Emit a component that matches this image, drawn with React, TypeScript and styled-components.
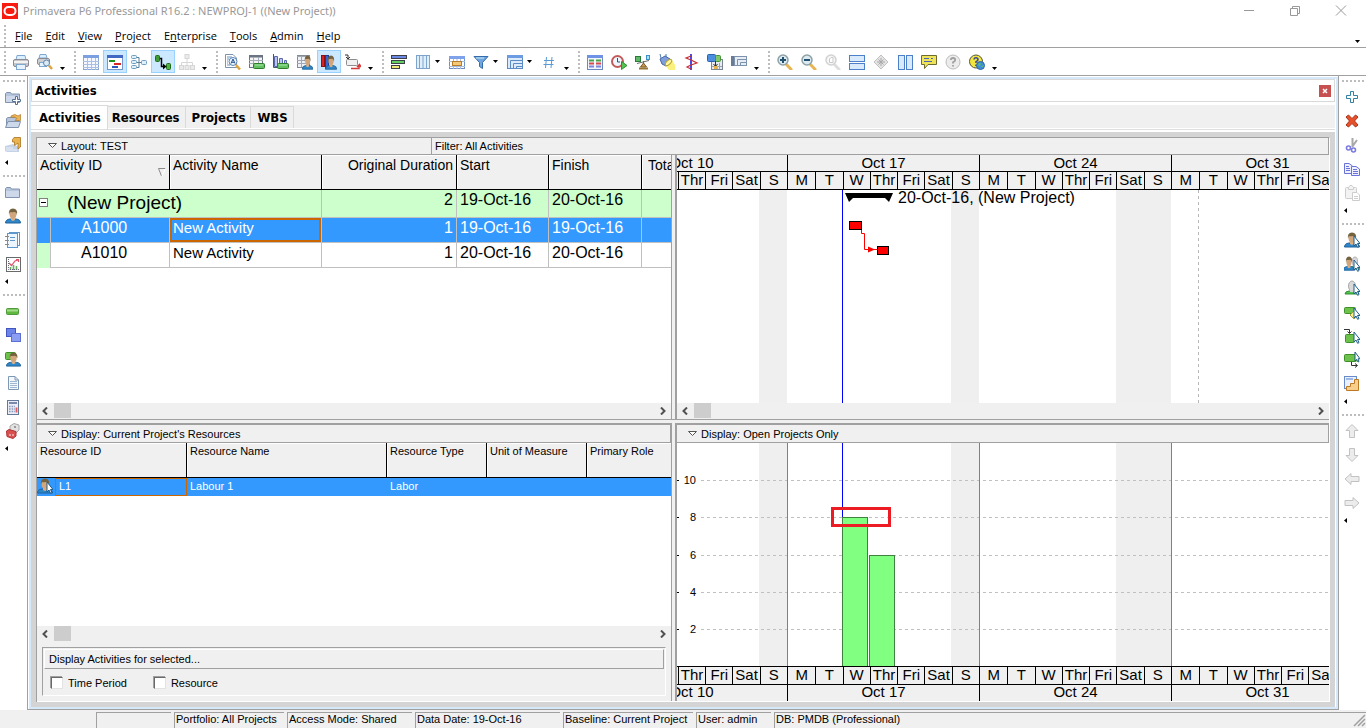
import React from "react";
import styled, { createGlobalStyle, css } from "styled-components";

const LINE = "#a0a0a0";
const FACE = "#f0f0f0";
const SELECT = "#3399ff";
const FOCUS = "#cc6600";
const GROUP = "#ccffcc";

const GlobalStyle = createGlobalStyle`
  * { box-sizing: border-box; }
  body {
    margin: 0;
    background: #fff;
    color: #000;
    font-family: "Liberation Sans", Arial, sans-serif;
    font-size: 11px;
    line-height: 14px;
  }
  button { font: inherit; color: inherit; padding: 0; margin: 0; border: 0; background: none; }
  svg { display: block; }
`;

/* ---------- icons ---------- */

const cursor = (
  <path d="M10 4V14L12 12L13.6 15.3L15 14.6L13.5 11.5H16Z" fill="#fff" stroke="#1f5f8b" strokeWidth="1" />
);

const person = (
  <>
    <path d="M0.5 15Q0.5 11.5 5 11H11Q15.5 11.5 15.5 15Z" fill="#2f86c9" stroke="#1f6299" />
    <path d="M6 9H10V12L8 13L6 12Z" fill="#d9ae85" />
    <ellipse cx="8" cy="6" rx="3.5" ry="4.5" fill="#d2a67c" />
    <path d="M4 7Q3 1 8 0.6Q13 1 12 7Q11.5 3.8 9 4Q6 4.5 5 4Q4.4 5 4 7Z" fill="#75623f" />
  </>
);

const ghost = (
  <>
    <path d="M1 14Q1 11.5 5 11H11Q15 11.5 15 14Z" fill="#55c255" stroke="#2e8f2e" />
    <ellipse cx="8" cy="6" rx="3.5" ry="5" fill="#d9d9d9" stroke="#a9a9a9" />
    <path d="M6 10H10V12H6Z" fill="#d0d0d0" />
  </>
);

const folder = (
  <>
    <path d="M0.5 13.5V4.5L1.5 3.5H5.5L6.5 5H14.5V13.5Z" fill="#b5c5dc" stroke="#8293ae" />
    <path d="M1 7H14V13H1Z" fill="#cdd9ea" />
  </>
);

const greenBar = (
  <>
    <rect x="1.5" y="5.5" width="12" height="6" rx="1" fill="#5fb93f" stroke="#4f9a3b" />
    <path d="M2 7.5H13" stroke="#a5dc8c" strokeWidth="2" />
  </>
);

const gridTable = (
  <>
    <rect x="0.5" y="1.5" width="15" height="14" fill="#f5f9ff" stroke="#8ba6cf" />
    <rect x="0" y="1" width="16" height="3" fill="#7c9fe0" />
    <path d="M0 7.5H16M0 10.5H16M0 13.5H16M4.5 4V16M8.5 4V16M12.5 4V16" stroke="#a9c0e4" />
  </>
);

const lens = (inner: React.ReactNode, muted = false) => (
  <>
    <path d="M9.5 10.5L14 15.2" stroke={muted ? "#dedede" : "#e9b552"} strokeWidth="3" strokeLinecap="round" />
    <circle cx="6" cy="6" r="5" fill={muted ? "#f7f7f7" : "#dcebf2"} stroke={muted ? "#d2d2d2" : "#8ea1a5"} strokeWidth="1.5" />
    {inner}
  </>
);

const ICONS: Record<string, React.ReactNode> = {
  printer: (
    <>
      <path d="M4 1.5H12L13 6H3Z" fill="#dcefff" stroke="#7fa8d0" />
      <rect x="0.5" y="5.5" width="15" height="7" rx="1.5" fill="#c6c6ca" stroke="#8a8a90" />
      <path d="M1 8H15" stroke="#f3f3f3" strokeWidth="2" />
      <rect x="3.5" y="10.5" width="9" height="5" fill="#e6f3ff" stroke="#7fa8d0" />
    </>
  ),
  preview: (
    <>
      <path d="M3 0.5H9L10 4H2Z" fill="#dcefff" stroke="#7fa8d0" />
      <rect x="0.5" y="4.5" width="12" height="6" rx="1.5" fill="#cfcfd2" stroke="#8a8a90" />
      <rect x="2.5" y="8.5" width="7" height="4" fill="#e6f3ff" stroke="#7fa8d0" />
      <circle cx="9.5" cy="9" r="3" fill="#dcebf2" stroke="#5c87b5" />
      <path d="M12 11.5L15 15" stroke="#d9a441" strokeWidth="2.5" />
    </>
  ),
  table: gridTable,
  gantt: (
    <>
      <rect x="0.5" y="1.5" width="15" height="14" fill="#fff" stroke="#7396cf" />
      <rect x="0" y="1" width="16" height="3" fill="#4169c4" />
      <rect x="2" y="6" width="6" height="2" fill="#1f8f1f" />
      <rect x="7" y="9" width="7" height="2" fill="#d62828" />
      <rect x="5" y="12" width="6" height="2" fill="#2a57c4" />
    </>
  ),
  trace: (
    <>
      <path d="M5 3.5H8V13.5H5M5 8.5H11" fill="none" stroke="#5b7f96" />
      <g fill="#dff0fb" stroke="#6f9dbd">
        <rect x="0.5" y="1.5" width="5" height="3" rx="1" />
        <rect x="0.5" y="6.5" width="5" height="3" rx="1" />
        <rect x="0.5" y="11.5" width="5" height="3" rx="1" />
        <rect x="10.5" y="6.5" width="5" height="4" rx="1" />
      </g>
    </>
  ),
  logic: (
    <>
      <rect x="0.5" y="1.5" width="4" height="6" rx="1" fill="#3f9b34" stroke="#1f6b1a" />
      <rect x="11.5" y="9.5" width="4" height="6" rx="1" fill="#4fb343" stroke="#1f6b1a" />
      <path d="M5 4.5H6.5V12.5H8.5" fill="none" stroke="#000" strokeWidth="1.5" />
      <path d="M8 9.5V15.5L11.5 12.5Z" fill="#000" />
    </>
  ),
  chart: (
    <g fill="#ebebeb" stroke="#d6d6d6">
      <path d="M8 5V8M2.5 11V8.5H13.5V11M8 8V11" fill="none" />
      <rect x="6" y="0.5" width="4" height="4" />
      <rect x="0.5" y="11.5" width="4" height="4" />
      <rect x="6" y="11.5" width="4" height="4" />
      <rect x="11.5" y="11.5" width="4" height="4" />
    </g>
  ),
  find: (
    <>
      <path d="M0.5 0.5H8L11.5 4V13.5H0.5Z" fill="#fff" stroke="#7b93ad" />
      <path d="M2 3H7M2 5H4M2 7H3M2 9H3M2 11H5" stroke="#6d8fc0" />
      <circle cx="8" cy="7.5" r="4" fill="#eaf5ff" stroke="#5883b3" />
      <path d="M6 9.5L8 5L10 9.5M7 8.3H9" fill="none" stroke="#24508f" />
      <path d="M11 11L15 15.5" stroke="#e0a63a" strokeWidth="2.5" />
    </>
  ),
  tableBar: (
    <>
      <rect x="0.5" y="1.5" width="13" height="12" fill="#f4f4f4" stroke="#6b7484" />
      <path d="M0 2.5H14" stroke="#6b7484" strokeWidth="2" />
      <path d="M0 6.5H14M0 9.5H14M4.5 3V13M9.5 3V13" stroke="#a2aab7" />
      <rect x="4.5" y="9.5" width="11" height="5" rx="1" fill="#63c163" stroke="#2a7d2a" />
      <path d="M6 11H14" stroke="#a9e6a9" />
    </>
  ),
  profile: (
    <>
      <path d="M0.5 0V13.5H6" fill="none" stroke="#4a5568" />
      <path d="M1.5 12.5V2.5H4.5V12.5ZM6.5 12V4.5H9.5V9M11.5 9V6.5H13.5V9" fill="#b9c5ee" stroke="#5968a8" />
      <rect x="4.5" y="9.5" width="11" height="5" rx="1" fill="#63c163" stroke="#2a7d2a" />
      <path d="M6 11H14" stroke="#a9e6a9" />
    </>
  ),
  resSheet: (
    <>
      <rect x="0.5" y="1.5" width="12" height="12" fill="#eef1f6" stroke="#858c98" />
      <path d="M0 2.5H13M0 6.5H13M0 9.5H13M4.5 2V13" stroke="#a0a8b5" />
      <g transform="translate(5 1) scale(0.7 0.95)">{person}</g>
    </>
  ),
  resProfile: (
    <>
      <rect x="0.5" y="1.5" width="3" height="11" fill="#d62424" stroke="#8f1010" />
      <rect x="4.5" y="1.5" width="3" height="13" fill="#3567d6" stroke="#173e96" />
      <g transform="translate(4 1) scale(0.75 0.95)">{person}</g>
    </>
  ),
  nextStep: (
    <>
      <path d="M0 1H3V4M1 3L3 5L5 3" fill="none" stroke="#333" />
      <rect x="1.5" y="5.5" width="11" height="6" rx="1" fill="#f1f1f1" stroke="#8d8d8d" />
      <path d="M6 14.5H14V12M12 13L14.5 10.5L16 13" fill="none" stroke="#d23a3a" strokeWidth="1.5" />
    </>
  ),
  bars: (
    <g stroke="#3c3f45">
      <rect x="0.5" y="1.5" width="15" height="3" fill="#6a8ae6" />
      <rect x="0.5" y="6.5" width="13" height="3" fill="#63cf63" />
      <rect x="0.5" y="11.5" width="8" height="3" fill="#efe97a" />
    </g>
  ),
  columns: (
    <>
      <rect x="1.5" y="1.5" width="13" height="13" fill="#dfeefb" stroke="#7fa4cc" />
      <path d="M4.5 1V15M8 1V15M11.5 1V15" stroke="#7fa4cc" />
    </>
  ),
  timescale: (
    <>
      <rect x="0.5" y="2.5" width="15" height="12" fill="#fff" stroke="#6f8fc4" />
      <rect x="0" y="2" width="16" height="3" fill="#7fa2ea" />
      <path d="M0 7.5H16M0 12.5H16M4.5 5V15M8 5V15M11.5 5V15" stroke="#a8bce0" />
      <rect x="3.5" y="7.5" width="9" height="4" fill="#f4c879" stroke="#b57d2c" />
    </>
  ),
  filter: (
    <>
      <path d="M1 2.5H15L9.5 8.5V14.5L6.5 12.5V8.5Z" fill="#6fa6de" stroke="#336ca8" />
      <path d="M3 4H11" stroke="#cfe4f8" />
    </>
  ),
  group: (
    <>
      <rect x="0.5" y="1.5" width="15" height="13" fill="#dcebfb" stroke="#5c8bc4" />
      <rect x="0" y="1" width="16" height="3" fill="#6b9be0" />
      <path d="M3.5 15V6.5H15M6.5 15V9.5H15M9.5 15V12.5H15" fill="none" stroke="#5c8bc4" />
    </>
  ),
  hash: <path d="M5.5 3L4.5 14M11 3L10 14M3 6.5H13M2.5 10.5H12.5" stroke="#5a9bd5" fill="none" />,
  details: (
    <>
      <rect x="0.5" y="1.5" width="15" height="14" fill="#f1f5fc" stroke="#6c88bf" />
      <rect x="0" y="1" width="16" height="3" fill="#6e93e6" />
      <path d="M2 6.5H7M9 6.5H14" stroke="#4aa34a" strokeWidth="2" />
      <path d="M2 9.5H7M9 9.5H14" stroke="#d84a4a" strokeWidth="2" />
      <path d="M2 12.5H7M9 12.5H14" stroke="#7d86e0" strokeWidth="2" />
    </>
  ),
  schedule: (
    <>
      <circle cx="6.5" cy="7.5" r="5.5" fill="#eef6ff" stroke="#c25c5c" strokeWidth="2" />
      <path d="M6.5 4V8H9" fill="none" stroke="#33507a" />
      <path d="M10.5 7.5V15.5L16 11.5Z" fill="#52c552" stroke="#2f8f2f" />
    </>
  ),
  level: (
    <>
      <rect x="0.5" y="2.5" width="5" height="5" fill="#5fb96b" stroke="#2b7a39" />
      <rect x="11.5" y="1.5" width="3" height="4" fill="#a8e1f8" stroke="#3c92c8" />
      <path d="M2 9.5L14 6.5M8.5 7V12" stroke="#6b6b6b" fill="none" />
      <path d="M8.5 9L11.5 13H5.5Z" fill="#c89a55" stroke="#7d5a22" />
      <path d="M4 14.5H13" stroke="#9a7433" strokeWidth="2" />
    </>
  ),
  spotlight: (
    <>
      <path d="M7 12L13 6L16 11V16H10Z" fill="#f9f17c" />
      <path d="M1 5L6 2L11 5L12 8L7 12L3 10Z" fill="#7d9edb" stroke="#4566a8" />
      <path d="M1 0L2 4M7 0V3" stroke="#4b78a8" />
      <ellipse cx="9.5" cy="8.5" rx="4" ry="2" transform="rotate(-45 9.5 8.5)" fill="#fff7a3" stroke="#b5a32a" />
    </>
  ),
  progress: (
    <>
      <rect x="7" y="0" width="2" height="16" fill="#4b4bef" />
      <path d="M8 2L3 4L8 6L14 9L8 11L4 13L8 15" fill="none" stroke="#c63030" strokeWidth="1.2" />
    </>
  ),
  store: (
    <>
      <rect x="4.5" y="5.5" width="11" height="10" fill="#e8ebef" stroke="#7c8795" />
      <path d="M5 12.5H15M12.5 9V15" stroke="#9aa5b3" />
      <rect x="0.5" y="0.5" width="8" height="7" rx="1" fill="#4c8fe0" stroke="#2b62ab" />
      <rect x="8.5" y="1.5" width="5" height="6" rx="1" fill="#7fc96a" stroke="#46913a" />
      <path d="M8.5 7V12M6.5 10L8.5 12.5L10.5 10" stroke="#333" fill="none" />
      <rect x="7" y="12" width="4" height="3" fill="#e6b24e" />
    </>
  ),
  groupGrey: (
    <>
      <rect x="0" y="2" width="3" height="10" fill="#6b7b91" />
      <rect x="3.5" y="2.5" width="12" height="9" fill="#e6edf5" stroke="#7d93ad" />
      <path d="M6.5 12V5.5H15M9.5 12V8.5H15" fill="none" stroke="#7d93ad" />
    </>
  ),
  zoomIn: lens(<path d="M3 6H9M6 3V9" stroke="#23506f" strokeWidth="2" />),
  zoomOut: lens(<path d="M3 6H9" stroke="#23506f" strokeWidth="2" />),
  zoomFit: lens(<path d="M4.5 8.5V5L6 3.5H8V8.5Z" fill="#fff" stroke="#c9c9c9" />, true),
  splitH: (
    <g fill="#d8eafc" stroke="#4c80c8">
      <rect x="0.5" y="1.5" width="15" height="6" />
      <rect x="0.5" y="9.5" width="15" height="6" />
    </g>
  ),
  splitV: (
    <g fill="#d8eafc" stroke="#4c80c8">
      <rect x="1.5" y="1.5" width="6" height="14" />
      <rect x="9.5" y="1.5" width="6" height="14" />
    </g>
  ),
  diamond: (
    <>
      <path d="M8 1L15 8L8 15L1 8Z" fill="#e3e3e3" stroke="#c2c2c2" />
      <path d="M8 4V12M4 8H12M5.5 5.5L10.5 10.5M10.5 5.5L5.5 10.5" stroke="#a9a9a9" />
    </>
  ),
  note: (
    <>
      <path d="M0.5 1.5H15.5V10.5H7L3.5 14.5V10.5H0.5Z" fill="#eee45a" stroke="#6e6b2d" />
      <path d="M3 4.5H8M10 4.5H12M3 7.5H11" stroke="#4f63b5" />
    </>
  ),
  help: (
    <>
      <circle cx="8" cy="8" r="7" fill="#ececec" stroke="#bdbdbd" />
      <path d="M5.8 6Q6 4 8 4Q10.2 4 10.2 6Q10.2 7.2 8 8.3V9.5M8 11V12.5" fill="none" stroke="#a0a0a0" strokeWidth="1.8" />
    </>
  ),
  helpWeb: (
    <>
      <circle cx="7" cy="7.5" r="6.5" fill="#f2e63c" stroke="#55553a" />
      <path d="M5 5.5Q5.2 3.8 7 3.8Q9 3.8 9 5.6Q9 6.8 7 7.8V9M7 10.5V12" fill="none" stroke="#3a49a0" strokeWidth="1.6" />
      <circle cx="11.5" cy="11.5" r="4" fill="#3f8fd8" stroke="#2a64a5" />
      <path d="M9 10Q11 8.5 12 10Q11 12 10 12ZM12 13L14.5 11V13Z" fill="#5fc060" />
    </>
  ),
  folderAdd: (
    <>
      {folder}
      <path d="M10.5 7.5V10.5H7.5V12.5H10.5V15.5H12.5V12.5H15.5V10.5H12.5V7.5Z" fill="#fff" stroke="#55708f" />
    </>
  ),
  folderOpen: (
    <>
      <path d="M1.5 13.5V5.5L3 4.5H13.5V13.5Z" fill="#b5c5dc" stroke="#8293ae" />
      <path d="M0.5 14.5L3 8.5H15.5L13.5 14.5Z" fill="#cdd9ea" stroke="#8293ae" />
      <path d="M6 3Q10 0 13 3L15.5 1.5V7.5H10L12 5.5Q9 3 6 4.5Z" fill="#edb458" stroke="#b07a24" strokeWidth="0.7" />
    </>
  ),
  folderClose: (
    <>
      <path d="M0 14V9L8 7L14 10V15L2 15Z" fill="#c6d3e6" />
      <path d="M1 11H8M1 13H12" stroke="#e9eff8" />
      <path d="M7.5 2.5L9 0.5H15.5V10L13 12V6L9.5 8.5V5H7.5Z" fill="#e9b34f" stroke="#a97420" strokeWidth="0.8" />
    </>
  ),
  folder,
  person,
  notebook: (
    <>
      <rect x="4.5" y="0.5" width="10" height="13" fill="#fff" stroke="#5f97cb" />
      <rect x="2.5" y="1.5" width="10" height="14" fill="#eef6fd" stroke="#5f97cb" />
      <path d="M5 5.5H10M5 8.5H10" stroke="#5f97cb" />
      <path d="M0 4.5H4M0 8.5H4M0 12.5H4" stroke="#8a8a8a" />
    </>
  ),
  trend: (
    <>
      <rect x="1.5" y="1.5" width="14" height="14" fill="#fff" stroke="#6a6a6a" />
      <path d="M5.5 14V11M8.5 14V9M11.5 14V10" stroke="#63b063" strokeWidth="1.6" />
      <path d="M4 7L6.5 9.5L10 5L13 4M11 3.5H13.5V6" fill="none" stroke="#e0526b" strokeWidth="1.2" />
      <path d="M3.5 3V13.5H14" fill="none" stroke="#667" strokeDasharray="1 1" />
    </>
  ),
  greenBar,
  squares: (
    <>
      <rect x="1.5" y="1.5" width="9" height="8" fill="#6c83ea" stroke="#4257bd" />
      <rect x="6.5" y="6.5" width="9" height="8" fill="#8b9ef2" stroke="#5c70d4" />
    </>
  ),
  assign: (
    <>
      <rect x="0.5" y="1.5" width="10" height="7" rx="1" fill="#6cc24a" stroke="#3f8f2b" />
      <g transform="translate(1 1) scale(0.94)">{person}</g>
    </>
  ),
  doc: (
    <>
      <path d="M3.5 1.5H10L13.5 5V14.5H3.5Z" fill="#f4f8fd" stroke="#7c98b5" />
      <path d="M10 1.5V5H13.5" fill="none" stroke="#7c98b5" />
      <path d="M5 6.5H12M5 8.5H12M5 10.5H12M5 12.5H12" stroke="#9db7d3" />
    </>
  ),
  calc: (
    <>
      <rect x="2.5" y="1.5" width="11" height="14" fill="#e9edf6" stroke="#66779c" />
      <rect x="4" y="3" width="8" height="2" fill="#7a88ad" />
      <path d="M4 7.5H10M4 10H10M4 12.5H10" stroke="#8b98bd" strokeWidth="1.6" strokeDasharray="1.6 1" />
      <path d="M11.5 8.5V13.5" stroke="#e05a5a" strokeWidth="1.8" />
    </>
  ),
  dice: (
    <>
      <path d="M5 3L9 0.5L14 2V7L11 10L5 8Z" fill="#e2e2e2" stroke="#a8a8a8" />
      <path d="M1.5 8L4 6.5L11 8.5V13L8 15.5L2 13.5Z" fill="#d95050" stroke="#b03434" />
      <circle cx="10" cy="4" r="0.9" fill="#777" />
      <circle cx="5" cy="12" r="0.8" fill="#fff" />
      <circle cx="8" cy="12" r="0.8" fill="#fff" />
    </>
  ),
  add: <path d="M6.5 2.5H9.5V6.5H13.5V9.5H9.5V13.5H6.5V9.5H2.5V6.5H6.5Z" fill="#fff" stroke="#3480a3" />,
  remove: (
    <path d="M2 4L4.5 2L8 5.5L11.5 2L14 4L10.5 8L14 12L11.5 14L8 10.5L4.5 14L2 12L5.5 8Z" fill="#e8502c" stroke="#a83216" />
  ),
  cut: (
    <>
      <path d="M8.5 1V10M13 3L8 10" stroke="#a8a8a8" strokeWidth="2" fill="none" />
      <circle cx="4.5" cy="11" r="2" fill="none" stroke="#7b7be0" strokeWidth="1.6" />
      <circle cx="9.5" cy="13" r="2" fill="none" stroke="#7b7be0" strokeWidth="1.6" />
    </>
  ),
  copy: (
    <g fill="#eef0ff" stroke="#6a73d8">
      <path d="M0.5 2.5H5L8.5 5V12.5H0.5Z" />
      <path d="M7.5 5.5H12L15.5 8V14.5H7.5Z" />
      <path d="M2 5.5H5M2 7.5H6M2 9.5H6M9 8.5H13M9 10.5H14M9 12.5H14" />
    </g>
  ),
  paste: (
    <g fill="#f3f3f3" stroke="#cdcdcd">
      <rect x="1.5" y="2.5" width="11" height="11" rx="1" />
      <path d="M4.5 4.5V2.5L6 0.5H8L9.5 2.5V4.5Z" />
      <path d="M8.5 7.5H13L15.5 10V15.5H8.5Z" fill="#fff" />
      <path d="M10 11.5H14M10 13.5H14" />
    </g>
  ),
  personPick: (
    <>
      {person}
      {cursor}
    </>
  ),
  peoplePick: (
    <>
      <g transform="translate(5 0) scale(0.75 0.95)">{ghost}</g>
      <g transform="translate(-1 0) scale(0.75 0.95)">{person}</g>
      {cursor}
    </>
  ),
  ghostPick: (
    <>
      {ghost}
      {cursor}
    </>
  ),
  codePick: (
    <>
      <rect x="0.5" y="3.5" width="11" height="6" rx="1" fill="#6cc24a" stroke="#3f8f2b" />
      <path d="M6 11L10 7L14 11L10 15Z" fill="#f7f08a" stroke="#a8993a" />
      {cursor}
    </>
  ),
  predecessor: (
    <>
      <path d="M0 1.5H5.5V5M3.5 3.5L5.5 5.5L7.5 3.5" fill="none" stroke="#333" />
      <rect x="1.5" y="6.5" width="9" height="8" rx="1" fill="#6cc24a" stroke="#3f8f2b" />
      {cursor}
    </>
  ),
  successor: (
    <>
      <rect x="0.5" y="2.5" width="12" height="7" rx="1" fill="#6cc24a" stroke="#3f8f2b" />
      <path d="M7.5 10V13.5H13M11 11.5L13.5 13.5L11 15.5" fill="none" stroke="#333" />
      <path d="M11 0V9L12.6 7.4L14 10L15 9.5L14 6.8H16Z" fill="#fff" stroke="#1f5f8b" />
    </>
  ),
  steps: (
    <>
      <rect x="0.5" y="0.5" width="12" height="12" fill="#eaf1fc" stroke="#6a8bc9" />
      <rect x="2" y="2" width="7" height="2" fill="#9fb8ea" />
      <path d="M2.5 14.5V10.5H6.5V7.5H10.5V3.5H14.5V14.5Z" fill="#f9cf8c" stroke="#bd7a22" />
    </>
  ),
  up: <path d="M8 1.5L14 7.5H10.5V14.5H5.5V7.5H2Z" fill="#ececec" stroke="#c2c2c2" />,
  down: <path d="M8 14.5L14 8.5H10.5V1.5H5.5V8.5H2Z" fill="#ececec" stroke="#c2c2c2" />,
  left: <path d="M1 8L7 2.5V5.5H15V10.5H7V13.5Z" fill="#ececec" stroke="#c2c2c2" />,
  right: <path d="M15 8L9 2.5V5.5H1V10.5H9V13.5Z" fill="#ececec" stroke="#c2c2c2" />,
};

const Icon = ({ name }: { name: string }) => (
  <svg width="16" height="16" viewBox="0 0 16 16" aria-hidden="true">
    {ICONS[name]}
  </svg>
);

/* ---------- window chrome ---------- */

const Window = styled.div`
  min-height: 100vh;
  display: flex;
  flex-direction: column;
`;

const TitleBar = styled.header`
  display: flex;
  align-items: center;
  height: 24px;
  padding: 0 18px 2px 2px;
  gap: 5px;
  color: #999;
  font-family: "Noto Sans", "Open Sans", sans-serif;
  font-size: 11px;
`;

const WindowButtons = styled.div`
  display: flex;
  gap: 32px;
  margin-left: auto;
`;

const WindowButton = styled.button`
  width: 14px;
  height: 14px;
`;

const MenuBar = styled.nav`
  display: flex;
  align-items: center;
  height: 24px;
  padding: 0 2px 0 4px;
  border-bottom: 1px solid ${LINE};
`;

const MenuItems = styled.div`
  display: flex;
  gap: 13px;
  margin-left: 6px;
  font-family: "Open Sans", "Noto Sans", sans-serif;
  font-size: 11px;
`;

const MenuOverflow = styled.button`
  align-self: flex-end;
  margin-left: auto;
  padding: 4px;
`;

const Grip = styled.span<{ $across?: boolean }>`
  flex: none;
  ${({ $across }) =>
    $across
      ? css`
          width: 22px;
          height: 2px;
          margin: 0 0 3px 3px;
          background: repeating-linear-gradient(90deg, #bdbdbd 0 2px, transparent 2px 4px);
        `
      : css`
          width: 2px;
          height: 22px;
          margin-right: 3px;
          background: repeating-linear-gradient(#bdbdbd 0 2px, transparent 2px 4px);
        `}
`;

const ToolBar = styled.div`
  display: flex;
  height: 28px;
  padding: 2px 4px;
  border-bottom: 1px solid ${LINE};
`;

const ToolGroup = styled.div`
  display: flex;
  align-items: center;
  height: 23px;
  margin-right: 6px;
`;

const ToolButton = styled.button<{ $on?: boolean }>`
  display: flex;
  align-items: center;
  justify-content: center;
  flex: none;
  width: 24px;
  height: 100%;
  ${({ $on }) => $on && css`
    background: #cce8ff;
    box-shadow: inset 0 0 0 1px #99d1ff;
  `}
`;

const DropButton = styled.button<{ $low?: boolean }>`
  display: flex;
  flex: none;
  height: 100%;
  ${({ $low }) =>
    $low
      ? css`
          width: 11px;
          padding-bottom: 3px;
          align-items: flex-end;
          justify-content: center;
        `
      : css`
          width: 10px;
          padding-bottom: 1px;
          align-items: center;
        `}
`;

const Caret = () => (
  <svg width="5" height="3" viewBox="0 0 5 3" aria-hidden="true">
    <path d="M0 0H5L2.5 3Z" />
  </svg>
);

type Tool = { icon: string; label: string; on?: boolean; drop?: boolean };

const tool = (icon: string, label: string, extra: Partial<Tool> = {}): Tool => ({ icon, label, ...extra });

const TOOL_GROUPS: Tool[][] = [
  [tool("printer", "Print"), tool("preview", "Print Preview")],
  [
    tool("table", "Activity Table"),
    tool("gantt", "Gantt Chart", { on: true }),
    tool("trace", "Activity Network"),
    tool("logic", "Relationship Lines", { on: true }),
    tool("chart", "Chart View"),
  ],
  [
    tool("find", "Activity Details"),
    tool("tableBar", "Activity Usage Spreadsheet"),
    tool("profile", "Activity Usage Profile"),
    tool("resSheet", "Resource Usage Spreadsheet"),
    tool("resProfile", "Resource Usage Profile", { on: true }),
    tool("nextStep", "Trace Logic"),
  ],
  [
    tool("bars", "Bars"),
    tool("columns", "Columns", { drop: true }),
    tool("timescale", "Timescale"),
    tool("filter", "Filters", { drop: true }),
    tool("group", "Group and Sort", { drop: true }),
    tool("hash", "Line Numbers"),
  ],
  [
    tool("details", "Layout Options"),
    tool("schedule", "Schedule"),
    tool("level", "Level Resources"),
    tool("spotlight", "Progress Spotlight"),
    tool("progress", "Progress Line"),
    tool("store", "Store Period Performance"),
    tool("groupGrey", "Summarize"),
  ],
  [
    tool("zoomIn", "Zoom In"),
    tool("zoomOut", "Zoom Out"),
    tool("zoomFit", "Zoom to Best Fit"),
    tool("splitH", "Tile Horizontally"),
    tool("diamond", "Center"),
    tool("splitV", "Tile Vertically"),
    tool("note", "Hint Help"),
    tool("help", "Help"),
    tool("helpWeb", "Online Help"),
  ],
];

const Body = styled.div`
  flex: 1;
  display: flex;
`;

const Rail = styled.aside`
  flex: none;
  width: 27px;
  padding-top: 4px;
`;

const RailGroup = styled.div`
  display: flex;
  flex-direction: column;
  margin-bottom: 7px;
`;

const RailButton = styled.button`
  width: 27px;
  height: 24px;
  padding: 4px 5px;
`;

const RailMore = styled.button`
  width: 14px;
  height: 11px;
  padding-left: 5px;
`;

const LEFT_RAIL = [
  ["folderAdd", "folderOpen", "folderClose"],
  ["folder", "person", "notebook", "trend"],
  ["greenBar", "squares", "assign", "doc", "calc", "dice"],
];
const RIGHT_RAIL = [
  ["add", "remove", "cut", "copy", "paste"],
  ["personPick", "peoplePick", "ghostPick", "codePick", "predecessor", "successor", "steps"],
  ["up", "down", "left", "right"],
];

const IconRail = ({ groups }: { groups: string[][] }) => (
  <Rail>
    {groups.map((group) => (
      <RailGroup key={group[0]}>
        <Grip $across />
        {group.map((name) => (
          <RailButton key={name} aria-label={name}>
            <Icon name={name} />
          </RailButton>
        ))}
        <RailMore aria-label="More">
          <svg width="3" height="5" viewBox="0 0 3 5" aria-hidden="true">
            <path d="M3 0V5L0 2.5Z" />
          </svg>
        </RailMore>
      </RailGroup>
    ))}
  </Rail>
);

/* ---------- main frame ---------- */

const Frame = styled.div`
  flex: 1;
  min-width: 0;
  display: flex;
  border: 1px solid ${LINE};
  border-top: 0;
  padding: 1px 0 0 1px;
`;

const FrameInner = styled.main`
  flex: 1;
  min-width: 0;
  display: flex;
  flex-direction: column;
  padding-right: 1px;
  border: 2px solid #d6e9fb;
`;

const PanelTitle = styled.div`
  display: flex;
  align-items: center;
  justify-content: space-between;
  height: 23px;
  margin-bottom: 3px;
  padding: 0 3px;
  border: 1px solid #d9d9d9;
`;

const Heading = styled.h1`
  margin: 0;
  font: bold 13px/16px "DejaVu Sans Condensed", "DejaVu Sans", sans-serif;
`;

const CloseButton = styled.button`
  display: flex;
  align-items: center;
  justify-content: center;
  width: 12px;
  height: 12px;
  background: #c75050;
`;

const TabStrip = styled.div`
  display: flex;
  align-items: flex-end;
  height: 27px;
  padding-bottom: 2px;
  background: linear-gradient(${FACE} 0 23px, #fff 23px 24px, #dedede 24px 25px, #fff 25px);
`;

const Tab = styled.button<{ $active?: boolean }>`
  height: ${({ $active }) => ($active ? 24 : 22)}px;
  padding: ${({ $active }) => ($active ? "0 6px 0 8px" : "0 5px 0 6px")};
  margin-bottom: ${({ $active }) => ($active ? 1 : 2)}px;
  border: 1px solid #dadada;
  border-width: 1px 1px 0 0;
  background: ${({ $active }) => ($active ? "#fff" : FACE)};
  font: bold 13px/16px "DejaVu Sans Condensed", "DejaVu Sans", sans-serif;
  &:nth-child(2) {
    padding-left: 4px;
  }
`;

const WorkArea = styled.div`
  flex: 1;
  display: flex;
  padding: 5px;
  background: #d4d4d4;
`;

const Panes = styled.div`
  flex: 1;
  min-width: 0;
  display: flex;
  flex-direction: column;
  border: 1px solid ${LINE};
  border-width: 1px 1px 0 1px;
  border-right-color: #fff;
  background: ${FACE};
`;

const UpperSection = styled.section`
  flex: 1 0 282px;
  display: flex;
  flex-direction: column;
  margin-bottom: 3px;
`;

const LowerSection = styled.section`
  flex: 1 0 279px;
  display: flex;
  border-bottom: 1px solid #fff;
`;

const PaneRow = styled.div`
  flex: 1;
  display: flex;
  border-bottom: 1px solid ${LINE};
`;

const LeftPane = styled.div`
  flex: 0 1 635px;
  min-width: 0;
  display: flex;
  flex-direction: column;
  border-right: 1px solid ${LINE};
`;

const RightPane = styled.div`
  flex: 1;
  min-width: 0;
  display: flex;
  flex-direction: column;
  margin-left: 3px;
  border-left: 2px solid ${LINE};
  overflow: hidden;
`;

const LayoutBar = styled.div`
  display: flex;
  height: 17px;
  border: 1px solid ${LINE};
  border-width: 0 1px 1px 0;
`;

const BarPart = styled.div<{ $first?: boolean }>`
  display: flex;
  align-items: center;
  gap: 4px;
  ${({ $first }) =>
    $first
      ? css`
          flex: 0 1 395px;
          padding-left: 11px;
          border-right: 1px solid ${LINE};
        `
      : css`
          flex: 1;
          padding-left: 3px;
        `}
`;

const DisplayBar = styled.div`
  display: flex;
  align-items: center;
  gap: 4px;
  height: 20px;
  padding-left: 11px;
  border: 1px solid ${LINE};
  border-width: 2px 1px 1px 0;
`;

const Disclosure = () => (
  <svg width="9" height="6" viewBox="0 0 9 6" aria-hidden="true">
    <path d="M0.5 0.5H8.5L4.5 4.5Z" fill="#fff" stroke="#555" />
  </svg>
);

const Canvas = styled.div`
  flex: 1;
  background: #fff;
  overflow: hidden;
`;

/* ---------- tables ---------- */

const DataTable = styled.table`
  width: 100%;
  table-layout: fixed;
  border-collapse: separate;
  border-spacing: 0;
`;

const HeadCell = styled.th<{ $right?: boolean; $small?: boolean }>`
  height: 35px;
  padding: 1px 3px 0;
  border: 1px solid #000;
  border-width: 0 1px 1px 0;
  background: ${FACE};
  box-shadow: inset 1px 1px #fff;
  vertical-align: top;
  text-align: ${({ $right }) => ($right ? "right" : "left")};
  font-weight: normal;
  font-size: ${({ $small }) => ($small ? 11 : 14)}px;
  line-height: ${({ $small }) => ($small ? 14 : 18)}px;
  white-space: nowrap;
  overflow: hidden;
  &:last-child {
    border-right: 0;
    padding-left: ${({ $small }) => ($small ? 3 : 6)}px;
  }
`;

const SortHead = styled.div`
  display: flex;
  justify-content: space-between;
  svg {
    margin-top: 12px;
  }
`;

const ActivityRow = styled.tr<{ $selected?: boolean }>`
  color: ${({ $selected }) => ($selected ? "#fff" : "#000")};
  background: ${({ $selected }) => ($selected ? SELECT : "#fff")};
`;

const GroupRow = styled.tr`
  background: ${GROUP};
`;

const Cell = styled.td<{ $right?: boolean; $focus?: boolean; $id?: boolean; $group?: boolean; $name?: boolean }>`
  height: ${({ $group }) => ($group ? 28 : 25)}px;
  padding: ${({ $group }) => ($group ? "0 3px 7px" : "0 3px 5px")};
  padding-left: ${({ $id }) => ($id ? 30 : 3)}px;
  border: 1px solid #c0c0c0;
  border-width: 0 1px 1px 0;
  text-align: ${({ $right }) => ($right ? "right" : "left")};
  font-size: ${({ $name }) => ($name ? 15 : 16)}px;
  line-height: 18px;
  white-space: nowrap;
  &:last-child {
    border-right: 0;
  }
  ${({ $focus }) => $focus && css`
    box-shadow: inset 0 0 0 2px ${FOCUS};
  `}
`;

const IndentCell = styled.td<{ $selected?: boolean }>`
  border-right: 1px solid #c0c0c0;
  background: ${({ $selected }) => ($selected ? SELECT : GROUP)};
`;

const GroupCell = styled(Cell)`
  padding: 0 2px 2px;
`;

const GroupTitle = styled.div`
  display: flex;
  align-items: center;
  gap: 19px;
  font-size: 19px;
  line-height: 22px;
`;

const CollapseButton = styled.button`
  width: 9px;
  height: 9px;
  border: 1px solid #808080;
  background: #fff;
`;

const ResourceRow = styled.tr`
  background: ${SELECT};
  color: #fff;
`;

const ResourceCell = styled.td`
  height: 18px;
  padding: 0 3px 2px;
  white-space: nowrap;
`;

const ResourceIdCell = styled(ResourceCell)`
  padding: 0;
`;

const ResourceId = styled.div`
  display: flex;
  height: 18px;
  gap: 2px;
`;

const FocusBox = styled.span`
  flex: 1;
  padding-left: 3px;
  border: 1px solid ${FOCUS};
`;

/* ---------- scroll bars ---------- */

const ScrollTrack = styled.div`
  flex: none;
  display: flex;
  height: 16px;
  background: ${FACE};
`;

const ScrollButton = styled.button`
  display: flex;
  align-items: center;
  padding-left: 5px;
  width: 17px;
  &:last-child {
    padding-left: 6px;
    margin-left: auto;
  }
`;

const ScrollThumb = styled.div`
  width: 17px;
  height: 15px;
  background: #cdcdcd;
`;

const ScrollBar = () => (
  <ScrollTrack>
    <ScrollButton aria-label="Scroll left">
      <svg width="6" height="8" viewBox="0 0 6 8" aria-hidden="true">
        <path d="M5 0.5L1.5 4L5 7.5" fill="none" stroke="#505050" strokeWidth="2" />
      </svg>
    </ScrollButton>
    <ScrollThumb />
    <ScrollButton aria-label="Scroll right">
      <svg width="6" height="8" viewBox="0 0 6 8" aria-hidden="true">
        <path d="M1 0.5L4.5 4L1 7.5" fill="none" stroke="#505050" strokeWidth="2" />
      </svg>
    </ScrollButton>
  </ScrollTrack>
);

/* ---------- timescale ---------- */

/* Days scrolled out of view carry no label. */
const WEEKS = [
  { label: "Oct 10", days: ["", "", "", "Thr", "Fri", "Sat", "S"] },
  { label: "Oct 17", days: ["M", "T", "W", "Thr", "Fri", "Sat", "S"] },
  { label: "Oct 24", days: ["M", "T", "W", "Thr", "Fri", "Sat", "S"] },
  { label: "Oct 31", days: ["M", "T", "W", "Thr", "Fri", "Sat", ""] },
];

/* Four 192px weeks, scrolled so that Thursday of the first week is leftmost. */
const TimeStrip = styled.div`
  width: 768px;
  margin-left: -82px;
`;

const Scale = styled.div<{ $bottom?: boolean }>`
  display: flex;
  background: ${FACE};
  ${({ $bottom }) => ($bottom ? "border-top: 1px solid #000;" : "border-bottom: 1px solid #000;")}
`;

const Week = styled.div<{ $bottom?: boolean }>`
  display: flex;
  flex-direction: ${({ $bottom }) => ($bottom ? "column-reverse" : "column")};
  width: 192px;
  font-size: 15px;
  text-align: center;
  border-left: 1px solid #000;
`;

const WeekLabel = styled.div<{ $bottom?: boolean }>`
  height: 16px;
  line-height: ${({ $bottom }) => ($bottom ? 14 : 16)}px;
`;

const DayRow = styled.div<{ $bottom?: boolean }>`
  display: grid;
  grid-template-columns: repeat(7, 1fr);
  height: 18px;
  line-height: ${({ $bottom }) => ($bottom ? 16 : 15)}px;
  ${({ $bottom }) => ($bottom ? "border-bottom: 1px solid #000;" : "border-top: 1px solid #000;")}
`;

const Day = styled.div`
  min-width: 0;
  border-left: 1px solid #000;
  &:first-child {
    border-left: 0;
  }
`;

const TimeScale = ({ bottom }: { bottom?: boolean }) => (
  <Scale $bottom={bottom}>
    {WEEKS.map((week) => (
      <Week key={week.label} $bottom={bottom}>
        <WeekLabel $bottom={bottom}>{week.label}</WeekLabel>
        <DayRow $bottom={bottom}>
          {week.days.map((day, i) => (
            <Day key={i}>{day}</Day>
          ))}
        </DayRow>
      </Week>
    ))}
  </Scale>
);

const TimeDrawing = styled.svg`
  width: 768px;
  height: 100%;
`;

const Weekends = () => (
  <g fill="#efefef">
    <rect x="164" y="0" width="28" height="100%" />
    <rect x="356" y="0" width="28" height="100%" />
    <rect x="521" y="0" width="55" height="100%" />
  </g>
);

const GanttFill = styled(TimeStrip)`
  height: 100%;
`;

const GanttChart = () => (
  <GanttFill>
    <TimeDrawing role="img" aria-label="Gantt chart">
      <Weekends />
      <line x1="247.5" x2="247.5" y1="0" y2="100%" stroke="#0000ff" />
      <line x1="603.5" x2="603.5" y1="0" y2="100%" stroke="#b8b8b8" strokeDasharray="3 3" />
      <path d="M250 3H298L294 12L290 8H258L254 12Z" />
      <text x="303" y="13" fontSize="16">
        20-Oct-16, (New Project)
      </text>
      <rect x="254.5" y="31.5" width="12" height="8" fill="#ff0000" stroke="#000" />
      <path d="M266.5 40V43.5H269.5V59.5H282" fill="none" stroke="#ff0000" />
      <path d="M273 56.5L280 59.5L273 62.5Z" fill="#ff0000" />
      <rect x="282.5" y="56.5" width="11" height="8" fill="#ff0000" stroke="#000" />
    </TimeDrawing>
  </GanttFill>
);

const HistogramSpace = styled.div`
  flex: 1;
  min-height: 223px;
  display: flex;
  align-items: flex-end;
  background: #fff;
`;

const HistogramSvg = styled.svg`
  flex: none;
  width: 768px;
  height: 223px;
  margin-left: -82px;
`;

const TICKS = [
  { value: 10, y: 37 },
  { value: 8, y: 74 },
  { value: 6, y: 112 },
  { value: 4, y: 149 },
  { value: 2, y: 186 },
];

const Histogram = () => (
  <HistogramSpace>
    <HistogramSvg role="img" aria-label="Resource usage histogram">
      <Weekends />
      {TICKS.map(({ value, y }) => (
        <g key={value}>
          <line x1="82" x2="84" y1={y + 0.5} y2={y + 0.5} stroke="#000" />
          <text x="101" y={y + 4} fontSize="11" textAnchor="end">
            {value}
          </text>
          <line x1="106" x2="768" y1={y + 0.5} y2={y + 0.5} stroke="#c0c0c0" strokeDasharray="3 3" />
        </g>
      ))}
      {[192, 384, 576].map((x) => (
        <line key={x} x1={x + 0.5} x2={x + 0.5} y1="0" y2="223" stroke="#808080" />
      ))}
      <line x1="247.5" x2="247.5" y1="0" y2="75" stroke="#0000ff" />
      <rect x="247.5" y="74.5" width="25" height="149" fill="#80ff80" stroke="#408040" />
      <rect x="274.5" y="112.5" width="25" height="111" fill="#80ff80" stroke="#408040" />
      <rect x="237.5" y="65.5" width="57" height="17" fill="none" stroke="#ed1c24" strokeWidth="3" />
    </HistogramSvg>
  </HistogramSpace>
);

/* ---------- selection options ---------- */

const Options = styled.fieldset`
  margin: 5px 5px 5px;
  padding: 1px;
  min-width: 0;
  height: 49px;
  border: 1px solid;
  border-color: ${LINE} #fff #fff ${LINE};
`;

const OptionsTitle = styled.div`
  height: 20px;
  padding: 2px 4px;
  border: 1px solid;
  border-color: #fff ${LINE} ${LINE} #fff;
`;

const OptionRow = styled.div`
  display: flex;
  gap: 27px;
  padding: 7px 7px 0;
`;

const OptionLabel = styled.label`
  display: flex;
  align-items: center;
  gap: 5px;
`;

const CheckBox = styled.input`
  appearance: none;
  width: 12px;
  height: 12px;
  margin: 0;
  background: #fff;
  border: 1px solid;
  border-color: #696969 #e3e3e3 #e3e3e3 #696969;
  box-shadow: -1px -1px #a0a0a0;
`;

/* ---------- status bar ---------- */

const StatusBar = styled.footer`
  display: flex;
  gap: 3px;
  height: 18px;
  padding: 2px 0 0 96px;
  background: ${FACE};
  line-height: 13px;
  white-space: nowrap;
  overflow: hidden;
`;

const StatusCell = styled.div<{ $width: number }>`
  flex: 0 1 ${({ $width }) => $width}px;
  padding-left: 1px;
  border: 1px solid ${LINE};
  border-width: 1px 0 0 1px;
  &:last-child {
    flex: 1;
    display: flex;
    justify-content: space-between;
    align-items: flex-start;
  }
`;

const STATUS: [string, number][] = [
  ["", 75],
  ["Portfolio: All Projects", 110],
  ["Access Mode: Shared", 125],
  ["Data Date: 19-Oct-16", 145],
  ["Baseline: Current Project", 130],
  ["User: admin", 75],
];

const MENUS: [string, string, string][] = [
  ["", "F", "ile"],
  ["", "E", "dit"],
  ["", "V", "iew"],
  ["", "P", "roject"],
  ["E", "n", "terprise"],
  ["", "T", "ools"],
  ["", "A", "dmin"],
  ["", "H", "elp"],
];

const ACTIVITIES = [
  { id: "A1000", name: "New Activity", duration: 1, start: "19-Oct-16", finish: "19-Oct-16", selected: true },
  { id: "A1010", name: "New Activity", duration: 1, start: "20-Oct-16", finish: "20-Oct-16", selected: false },
];

export default function App() {
  return (
    <Window>
      <GlobalStyle />
      <TitleBar>
        <svg width="16" height="16" viewBox="0 0 16 16" aria-hidden="true">
          <rect width="16" height="16" fill="#f81b10" />
          <rect x="2.5" y="4" width="11" height="8" rx="4" fill="none" stroke="#fff" strokeWidth="2" />
        </svg>
        <span>Primavera P6 Professional R16.2 : NEWPROJ-1 ((New Project))</span>
        <WindowButtons>
          <WindowButton aria-label="Minimize">
            <svg width="14" height="14" viewBox="0 0 14 14">
              <path d="M2 6.5H12" stroke="#999" />
            </svg>
          </WindowButton>
          <WindowButton aria-label="Restore">
            <svg width="14" height="14" viewBox="0 0 14 14">
              <path d="M2.5 4.5H9.5V11.5H2.5ZM4.5 4.5V2.5H11.5V9.5H9.5" fill="none" stroke="#999" />
            </svg>
          </WindowButton>
          <WindowButton aria-label="Close">
            <svg width="14" height="14" viewBox="0 0 14 14">
              <path d="M2 1.5L12 11.5M12 1.5L2 11.5" stroke="#999" />
            </svg>
          </WindowButton>
        </WindowButtons>
      </TitleBar>

      <MenuBar>
        <Grip />
        <MenuItems>
          {MENUS.map(([before, key, after]) => (
            <button key={before + key + after}>
              {before}
              <u>{key}</u>
              {after}
            </button>
          ))}
        </MenuItems>
        <MenuOverflow aria-label="Menu options">
          <Caret />
        </MenuOverflow>
      </MenuBar>

      <ToolBar>
        {TOOL_GROUPS.map((group) => (
          <ToolGroup key={group[0].icon}>
            <Grip />
            {group.map(({ icon, label, on, drop }) => (
              <React.Fragment key={icon}>
                <ToolButton $on={on} aria-label={label}>
                  <Icon name={icon} />
                </ToolButton>
                {drop && (
                  <DropButton aria-label={`${label} menu`}>
                    <Caret />
                  </DropButton>
                )}
              </React.Fragment>
            ))}
            <DropButton $low aria-label="Toolbar options">
              <Caret />
            </DropButton>
          </ToolGroup>
        ))}
      </ToolBar>

      <Body>
        <IconRail groups={LEFT_RAIL} />
        <Frame>
          <FrameInner>
            <PanelTitle>
              <Heading>Activities</Heading>
              <CloseButton aria-label="Close view">
                <svg width="6" height="6" viewBox="0 0 6 6" aria-hidden="true">
                  <path d="M1 1L5 5M5 1L1 5" stroke="#fff" strokeWidth="1.5" />
                </svg>
              </CloseButton>
            </PanelTitle>
            <TabStrip>
              <Tab $active>Activities</Tab>
              <Tab>Resources</Tab>
              <Tab>Projects</Tab>
              <Tab>WBS</Tab>
            </TabStrip>

            <WorkArea>
              <Panes>
                <UpperSection>
                  <LayoutBar>
                    <BarPart $first>
                      <Disclosure />
                      Layout: TEST
                    </BarPart>
                    <BarPart>Filter: All Activities</BarPart>
                  </LayoutBar>
                  <PaneRow>
                    <LeftPane>
                      <Canvas>
                        <DataTable>
                          <colgroup>
                            <col width="14" />
                            <col width="119" />
                            <col width="152" />
                            <col width="135" />
                            <col width="92" />
                            <col width="93" />
                            <col />
                          </colgroup>
                          <thead>
                            <tr>
                              <HeadCell colSpan={2}>
                                <SortHead>
                                  Activity ID
                                  <svg width="8" height="9" viewBox="0 0 8 9" aria-hidden="true">
                                    <path d="M7.5 0.5H0.5L3.5 8" fill="none" stroke="#8a8a8a" />
                                    <path d="M7.5 0.5L4 8" stroke="#fff" />
                                  </svg>
                                </SortHead>
                              </HeadCell>
                              <HeadCell>Activity Name</HeadCell>
                              <HeadCell $right>Original Duration</HeadCell>
                              <HeadCell>Start</HeadCell>
                              <HeadCell>Finish</HeadCell>
                              <HeadCell>Total</HeadCell>
                            </tr>
                          </thead>
                          <tbody>
                            <GroupRow>
                              <GroupCell colSpan={3} $group>
                                <GroupTitle>
                                  <CollapseButton aria-label="Collapse group">
                                    <svg width="7" height="7" viewBox="0 0 7 7" aria-hidden="true">
                                      <path d="M1 3.5H6" stroke="#000" />
                                    </svg>
                                  </CollapseButton>
                                  (New Project)
                                </GroupTitle>
                              </GroupCell>
                              <Cell $right $group>2</Cell>
                              <Cell $group>19-Oct-16</Cell>
                              <Cell $group>20-Oct-16</Cell>
                              <Cell $group />
                            </GroupRow>
                            {ACTIVITIES.map((a) => (
                              <ActivityRow key={a.id} $selected={a.selected}>
                                <IndentCell $selected={a.selected} />
                                <Cell $id>{a.id}</Cell>
                                <Cell $name $focus={a.selected}>{a.name}</Cell>
                                <Cell $right>{a.duration}</Cell>
                                <Cell>{a.start}</Cell>
                                <Cell>{a.finish}</Cell>
                                <Cell />
                              </ActivityRow>
                            ))}
                          </tbody>
                        </DataTable>
                      </Canvas>
                      <ScrollBar />
                    </LeftPane>
                    <RightPane>
                      <TimeStrip>
                        <TimeScale />
                      </TimeStrip>
                      <Canvas>
                        <GanttChart />
                      </Canvas>
                      <ScrollBar />
                    </RightPane>
                  </PaneRow>
                </UpperSection>

                <LowerSection>
                  <LeftPane>
                    <DisplayBar>
                      <Disclosure />
                      Display: Current Project's Resources
                    </DisplayBar>
                    <Canvas>
                      <DataTable>
                        <colgroup>
                          <col width="150" />
                          <col width="200" />
                          <col width="100" />
                          <col width="100" />
                          <col />
                        </colgroup>
                        <thead>
                          <tr>
                            <HeadCell $small>Resource ID</HeadCell>
                            <HeadCell $small>Resource Name</HeadCell>
                            <HeadCell $small>Resource Type</HeadCell>
                            <HeadCell $small>Unit of Measure</HeadCell>
                            <HeadCell $small>Primary Role</HeadCell>
                          </tr>
                        </thead>
                        <tbody>
                          <ResourceRow>
                            <ResourceIdCell>
                              <ResourceId>
                                <Icon name="personPick" />
                                <FocusBox>L1</FocusBox>
                              </ResourceId>
                            </ResourceIdCell>
                            <ResourceCell>Labour 1</ResourceCell>
                            <ResourceCell>Labor</ResourceCell>
                            <ResourceCell />
                            <ResourceCell />
                          </ResourceRow>
                        </tbody>
                      </DataTable>
                    </Canvas>
                    <ScrollBar />
                    <Options>
                      <OptionsTitle>Display Activities for selected...</OptionsTitle>
                      <OptionRow>
                        <OptionLabel>
                          <CheckBox type="checkbox" />
                          Time Period
                        </OptionLabel>
                        <OptionLabel>
                          <CheckBox type="checkbox" />
                          Resource
                        </OptionLabel>
                      </OptionRow>
                    </Options>
                  </LeftPane>
                  <RightPane>
                    <DisplayBar>
                      <Disclosure />
                      Display: Open Projects Only
                    </DisplayBar>
                    <Histogram />
                    <TimeStrip>
                      <TimeScale bottom />
                    </TimeStrip>
                  </RightPane>
                </LowerSection>
              </Panes>
            </WorkArea>
          </FrameInner>
        </Frame>
        <IconRail groups={RIGHT_RAIL} />
      </Body>

      <StatusBar>
        {STATUS.map(([text, width]) => (
          <StatusCell key={text} $width={width}>
            {text}
          </StatusCell>
        ))}
        <StatusCell $width={592}>
          DB: PMDB (Professional)
          <svg width="14" height="14" viewBox="0 0 14 14" aria-hidden="true">
            <path d="M2 13L13 2M6 13L13 6M10 13L13 10" stroke="#a0a0a0" strokeWidth="1.5" />
          </svg>
        </StatusCell>
      </StatusBar>
    </Window>
  );
}
